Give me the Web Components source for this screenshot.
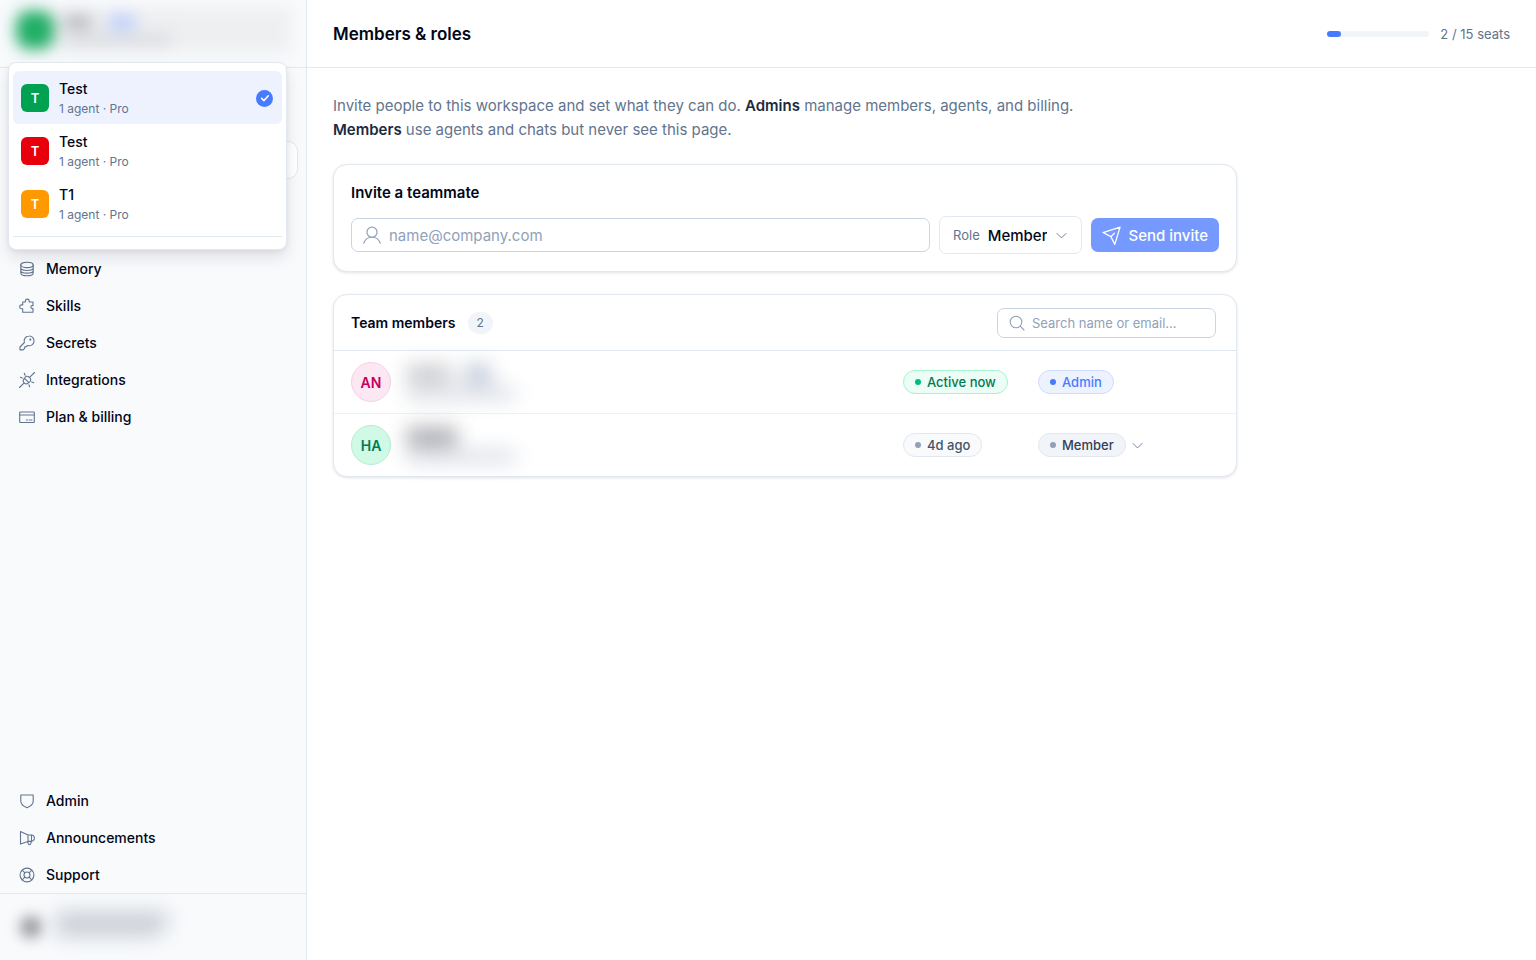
<!DOCTYPE html>
<html lang="en">
<head>
<meta charset="utf-8">
<meta name="viewport" content="width=device-width, initial-scale=1">
<title>Members &amp; roles</title>
<style>
    :root {
        --ink: #020618;
        --muted: #62748e;
        --faint: #90a1b9;
        --line: #e2e8f0;
        --field: #cad5e2;
        --blue: #477bff;
    }
    body {
        margin: 0;
        font-family: Inter, "Liberation Sans", sans-serif;
        font-size: 14px;
        color: var(--ink);
        background: white;
    }
</style>
</head>
<body>
<app-shell>
    <app-sidebar slot="sidebar">
        <workspace-menu slot="menu">
            <workspace-item name="Test" color="#00a251" selected></workspace-item>
            <workspace-item name="Test" color="#e7000b"></workspace-item>
            <workspace-item name="T1" color="#fe9a00"></workspace-item>
        </workspace-menu>
        <nav-item icon="memory">Memory</nav-item>
        <nav-item icon="skills">Skills</nav-item>
        <nav-item icon="key">Secrets</nav-item>
        <nav-item icon="plug">Integrations</nav-item>
        <nav-item icon="card">Plan &amp; billing</nav-item>
        <nav-item slot="bottom" icon="shield">Admin</nav-item>
        <nav-item slot="bottom" icon="megaphone">Announcements</nav-item>
        <nav-item slot="bottom" icon="support">Support</nav-item>
    </app-sidebar>
    <page-header>
        Members &amp; roles
        <seat-meter slot="aside" used="2" total="15"></seat-meter>
    </page-header>
    <members-page>
        <invite-card></invite-card>
        <team-card></team-card>
    </members-page>
</app-shell>

<script>
const ICONS = {
    memory: '<ellipse cx="8" cy="3.900" rx="6.200" ry="2.700"/><path d="M1.800 3.900v8c0 1.600 2.800 2.800 6.200 2.800s6.200-1.200 6.200-2.800v-8M1.800 6.800c0 1.600 2.800 2.700 6.200 2.700s6.200-1.100 6.200-2.700M1.800 9.400c0 1.600 2.800 2.700 6.200 2.700s6.200-1.100 6.200-2.700"/>',
    skills: '<path d="M3.700 4h2.700V3a1.900 1.900 0 0 1 3.800 0v1H14v3.600h-.7a1.500 1.500 0 0 0 0 3h.7v3.600H3.700v-3.500H2.500a1.900 1.900 0 0 1 0-3.800h1.200z"/>',
    key: '<path d="M10 1a4.900 4.900 0 1 1-1.500 9.500L7.300 11.700H5.700v1.600l-1.600 1.600H1V12l4.400-4.500A4.900 4.900 0 0 1 10 1z"/><circle cx="11.300" cy="4.600" r=".5" fill="currentColor"/>',
    plug: '<path d="M.5 15.500l4.400-4.400M11.100 4.900L15.500.5M5.300 6.100l4.600 4.600M6.100 5.300a2.700 2.700 0 0 1 3.900-.3l1 1a2.700 2.700 0 0 1-.3 3.900M5.600 6.300l-.8.800a2.700 2.700 0 0 0 0 3.400l.7.700a2.700 2.700 0 0 0 3.400 0l.8-.8M5.300 1.300l.8 2M1.300 5.300l2 .8M9.900 12.700l.8 2M12.700 9.900l2 .8"/>',
    card: '<rect x=".7" y="3" width="14.600" height="10.500" rx=".6"/><path d="M.7 6h14.600M7.300 11h1.500M10.500 11h2.500"/>',
    shield: '<path d="M1.800 2h12.400v6.300c0 3.200-2.600 5-6.200 6.400-3.600-1.400-6.200-3.200-6.200-6.400z"/>',
    megaphone: '<path d="M1.500 1.500L9 5h3.200a3.200 3.200 0 0 1 0 6.400H9l-7.500 2.700zM9 5v6.400M8.500 11.500l1 2.600c.3.900 1.700.9 2 0l1-2.700V5"/>',
    support: '<circle cx="8" cy="8" r="6.900"/><circle cx="8" cy="8" r="3"/><path d="M3.200 3.200l2.700 2.700M10.100 10.100l2.700 2.700M12.800 3.200l-2.700 2.700M5.900 10.100l-2.700 2.700"/>',
    user: '<circle cx="8" cy="5.500" r="4.500"/><path d="M.7 15.200C1.800 12 4.500 10 8 10s6.200 2 7.300 5.200"/>',
    send: '<path d="M15.200.9L10.800 15.500 7.500 9 .8 5.500zM7.500 9l3-3"/>',
    search: '<circle cx="7" cy="7" r="5.800"/><path d="M11.200 11.200L15 15"/>',
    chevron: '<path d="M2.500 5.500L8 11l5.500-5.500"/>',
    check: '<path d="M3.500 8.500l3 3 6-6.500"/>'
};

class UiIcon extends HTMLElement {
    connectedCallback() {
        this.attachShadow({ mode: 'open' });
        this.shadowRoot.innerHTML = `
            <style>
                :host {
                    display: inline-flex;
                    flex: none;
                    width: 16px;
                    height: 16px;
                }
                svg {
                    width: 100%;
                    height: 100%;
                    fill: none;
                    stroke: currentColor;
                    stroke-width: var(--stroke, 1.1);
                    stroke-linecap: round;
                    stroke-linejoin: round;
                    overflow: visible;
                }
            </style>
            <svg viewBox="0 0 16 16" aria-hidden="true">${ICONS[this.getAttribute('name')]}</svg>
        `;
    }
}
customElements.define('ui-icon', UiIcon);

class AppShell extends HTMLElement {
    connectedCallback() {
        this.attachShadow({ mode: 'open' });
        this.shadowRoot.innerHTML = `
            <style>
                :host {
                    display: grid;
                    grid-template-columns: 307px 1fr;
                    min-height: 100vh;
                }
                main {
                    min-width: 0;
                }
            </style>
            <slot name="sidebar"></slot>
            <main><slot></slot></main>
        `;
    }
}
customElements.define('app-shell', AppShell);

class AppSidebar extends HTMLElement {
    connectedCallback() {
        this.attachShadow({ mode: 'open' });
        this.shadowRoot.innerHTML = `
            <style>
                :host {
                    display: flex;
                    flex-direction: column;
                    box-sizing: border-box;
                    background: #f8fafc;
                    border-right: 1px solid var(--line);
                }
                header {
                    position: relative;
                    z-index: 2;
                    height: 67px;
                    border-bottom: 1px solid var(--line);
                }
                .current, .account {
                    display: flex;
                    align-items: center;
                    overflow: hidden;
                }
                .current {
                    height: 60px;
                    padding: 0 16px;
                }
                .current .wash {
                    flex: 1;
                    display: flex;
                    align-items: center;
                    gap: 10px;
                    height: 44px;
                    background: #eeeff1;
                    filter: blur(7px);
                }
                .tile {
                    width: 38px;
                    height: 38px;
                    border-radius: 14px;
                    background: #1fae65;
                    filter: blur(3px);
                }
                .lines {
                    display: grid;
                    gap: 5px;
                    filter: blur(4px);
                }
                .line {
                    display: flex;
                    gap: 16px;
                }
                .bar {
                    width: 28px;
                    height: 14px;
                    border-radius: 6px;
                    background: #b4b5ba;
                }
                .bar.plan {
                    background: #b7cbfd;
                }
                .bar.wide {
                    width: 108px;
                    height: 12px;
                    background: #d9dbe0;
                }
                .search {
                    height: 36px;
                    margin: 73px 8px 0;
                    border: 1px solid var(--line);
                    border-radius: 10px;
                    background: white;
                }
                nav {
                    display: flex;
                    flex-direction: column;
                    padding: 71px 8px 0;
                }
                .bottom {
                    margin-top: auto;
                    padding: 0 8px;
                }
                .account {
                    height: 66px;
                    gap: 14px;
                    padding: 0 20px;
                    border-top: 1px solid var(--line);
                }
                .account .face {
                    width: 22px;
                    height: 22px;
                    border-radius: 50%;
                    background: #96979c;
                    filter: blur(7px);
                }
                .account .who {
                    width: 112px;
                    height: 24px;
                    margin-bottom: 6px;
                    border-radius: 6px 6px 20px 6px;
                    background: #c9cdd4;
                    filter: blur(10px);
                }
            </style>
            <header>
                <div class="current">
                    <div class="wash">
                        <div class="tile"></div>
                        <div class="lines">
                            <div class="line"><div class="bar"></div><div class="bar plan"></div></div>
                            <div class="bar wide"></div>
                        </div>
                    </div>
                </div>
                <slot name="menu"></slot>
            </header>
            <div class="search"></div>
            <nav><slot></slot></nav>
            <nav class="bottom"><slot name="bottom"></slot></nav>
            <div class="account"><div class="face"></div><div class="who"></div></div>
        `;
    }
}
customElements.define('app-sidebar', AppSidebar);

class NavItem extends HTMLElement {
    connectedCallback() {
        this.attachShadow({ mode: 'open' });
        this.shadowRoot.innerHTML = `
            <style>
                :host {
                    display: block;
                }
                a {
                    display: flex;
                    align-items: center;
                    gap: 11px;
                    height: 37px;
                    padding: 0 11px;
                    border-radius: 8px;
                    color: var(--ink);
                    font-weight: 500;
                    text-decoration: none;
                }
                a:hover {
                    background: #eef2f7;
                }
                ui-icon {
                    color: var(--muted);
                }
            </style>
            <a href="#"><ui-icon name="${this.getAttribute('icon')}"></ui-icon><span><slot></slot></span></a>
        `;
    }
}
customElements.define('nav-item', NavItem);

class WorkspaceMenu extends HTMLElement {
    connectedCallback() {
        this.attachShadow({ mode: 'open' });
        this.shadowRoot.innerHTML = `
            <style>
                :host {
                    position: absolute;
                    top: 62px;
                    left: 8px;
                    right: 19px;
                    box-sizing: border-box;
                    padding: 8px 4px 12px;
                    background: white;
                    border: 1px solid var(--line);
                    border-radius: 8px;
                    box-shadow: 0 8px 16px rgba(15, 23, 43, 0.1), 0 2px 5px rgba(15, 23, 43, 0.06);
                }
                hr {
                    margin: 6px 0 0;
                    border: 0;
                    border-top: 1px solid var(--line);
                }
            </style>
            <slot></slot>
            <hr>
        `;
    }
}
customElements.define('workspace-menu', WorkspaceMenu);

class WorkspaceItem extends HTMLElement {
    connectedCallback() {
        const selected = this.hasAttribute('selected');
        this.attachShadow({ mode: 'open' });
        this.shadowRoot.innerHTML = `
            <style>
                :host {
                    display: block;
                }
                button {
                    display: flex;
                    align-items: center;
                    gap: 10px;
                    width: 100%;
                    padding: 7px 9px 6px 8px;
                    border: 0;
                    border-radius: 6px;
                    background: ${selected ? '#eef2ff' : 'none'};
                    color: var(--ink);
                    font: inherit;
                    text-align: left;
                }
                .tile {
                    display: grid;
                    place-items: center;
                    width: 28px;
                    height: 28px;
                    border-radius: 6px;
                    background: ${this.getAttribute('color')};
                    color: white;
                    font-size: 13px;
                    font-weight: 600;
                }
                .text {
                    flex: 1;
                }
                .name, .info {
                    display: block;
                    line-height: 21px;
                }
                .name {
                    font-weight: 500;
                }
                .info {
                    line-height: 19px;
                    font-size: 12px;
                    color: var(--muted);
                }
                .mark {
                    display: grid;
                    place-items: center;
                    width: 17px;
                    height: 17px;
                    border-radius: 50%;
                    background: var(--blue);
                    color: white;
                }
                .mark ui-icon {
                    --stroke: 2;
                    width: 12px;
                    height: 12px;
                }
            </style>
            <button type="button">
                <span class="tile">T</span>
                <span class="text">
                    <span class="name">${this.getAttribute('name')}</span>
                    <span class="info">1 agent · Pro</span>
                </span>
                ${selected ? '<span class="mark"><ui-icon name="check"></ui-icon></span>' : ''}
            </button>
        `;
    }
}
customElements.define('workspace-item', WorkspaceItem);

class PageHeader extends HTMLElement {
    connectedCallback() {
        this.attachShadow({ mode: 'open' });
        this.shadowRoot.innerHTML = `
            <style>
                :host {
                    display: flex;
                    justify-content: space-between;
                    align-items: center;
                    height: 67px;
                    padding: 0 26px;
                    border-bottom: 1px solid var(--line);
                }
                h1 {
                    margin: 0;
                    font-size: 17px;
                    font-weight: 600;
                }
            </style>
            <h1><slot></slot></h1>
            <slot name="aside"></slot>
        `;
    }
}
customElements.define('page-header', PageHeader);

class SeatMeter extends HTMLElement {
    connectedCallback() {
        const used = this.getAttribute('used');
        const total = this.getAttribute('total');
        this.attachShadow({ mode: 'open' });
        this.shadowRoot.innerHTML = `
            <style>
                :host {
                    display: flex;
                    align-items: center;
                    gap: 11px;
                    color: var(--muted);
                    font-size: 13px;
                }
                progress {
                    appearance: none;
                    width: 102px;
                    height: 6px;
                }
                progress::-webkit-progress-bar {
                    background: #f1f5f9;
                    border-radius: 3px;
                }
                progress::-webkit-progress-value {
                    background: var(--blue);
                    border-radius: 3px;
                }
            </style>
            <progress id="seats" value="${used}" max="${total}"></progress>
            <label for="seats">${used} / ${total} seats</label>
        `;
    }
}
customElements.define('seat-meter', SeatMeter);

class MembersPage extends HTMLElement {
    connectedCallback() {
        this.attachShadow({ mode: 'open' });
        this.shadowRoot.innerHTML = `
            <style>
                :host {
                    display: flex;
                    flex-direction: column;
                    gap: 22px;
                    max-width: 904px;
                    padding: 26px;
                }
                p {
                    max-width: 760px;
                    margin: 0;
                    color: var(--muted);
                    font-size: 15px;
                    line-height: 24px;
                }
                strong {
                    color: #1d293d;
                    font-weight: 600;
                }
            </style>
            <p>Invite people to this workspace and set what they can do. <strong>Admins</strong> manage members, agents, and billing. <strong>Members</strong> use agents and chats but never see this page.</p>
            <slot></slot>
        `;
    }
}
customElements.define('members-page', MembersPage);

const CARD = `
    :host {
        display: block;
        border: 1px solid var(--line);
        border-radius: 14px;
        background: white;
        box-shadow: 0 1px 3px rgba(15, 23, 43, 0.12);
    }
    h2 {
        margin: 0;
        font-size: 15px;
        font-weight: 600;
        line-height: 22px;
    }
    .field {
        display: flex;
        align-items: center;
        box-sizing: border-box;
        border: 1px solid var(--field);
        border-radius: 7px;
        color: var(--faint);
    }
    input {
        flex: 1;
        min-width: 0;
        padding: 0;
        border: 0;
        outline: 0;
        background: none;
        color: var(--ink);
        font: inherit;
    }
    input::placeholder {
        color: var(--faint);
    }
    select {
        appearance: none;
        padding: 0;
        border: 0;
        background: none;
        color: inherit;
        font: inherit;
        field-sizing: content;
    }
`;

class InviteCard extends HTMLElement {
    connectedCallback() {
        this.attachShadow({ mode: 'open' });
        this.shadowRoot.innerHTML = `
            <style>
                ${CARD}
                :host {
                    padding: 17px;
                }
                form {
                    display: flex;
                    align-items: center;
                    gap: 9px;
                    margin-top: 12px;
                }
                .field {
                    flex: 1;
                    gap: 8px;
                    height: 34px;
                    padding: 0 11px;
                    font-size: 15px;
                }
                .field ui-icon {
                    width: 18px;
                    height: 18px;
                }
                .role {
                    display: flex;
                    align-items: center;
                    gap: 8px;
                    box-sizing: border-box;
                    height: 38px;
                    padding: 0 13px;
                    border: 1px solid var(--line);
                    border-radius: 7px;
                    font-size: 15px;
                    font-weight: 500;
                }
                .role label {
                    color: var(--muted);
                    font-size: 13px;
                    font-weight: 400;
                }
                .role ui-icon {
                    width: 13px;
                    height: 13px;
                    color: var(--muted);
                }
                button {
                    display: flex;
                    align-items: center;
                    gap: 7px;
                    height: 34px;
                    padding: 0 11px;
                    border: 0;
                    border-radius: 7px;
                    background: #7699ff;
                    color: white;
                    font: inherit;
                    font-size: 15px;
                    font-weight: 500;
                }
                button ui-icon {
                    width: 19px;
                    height: 19px;
                }
            </style>
            <h2>Invite a teammate</h2>
            <form>
                <div class="field">
                    <ui-icon name="user"></ui-icon>
                    <input type="email" placeholder="name@company.com" aria-label="Email">
                </div>
                <div class="role">
                    <label for="role">Role</label>
                    <select id="role"><option>Member</option><option>Admin</option></select>
                    <ui-icon name="chevron"></ui-icon>
                </div>
                <button type="button"><ui-icon name="send"></ui-icon>Send invite</button>
            </form>
        `;
    }
}
customElements.define('invite-card', InviteCard);

class StatusPill extends HTMLElement {
    connectedCallback() {
        this.attachShadow({ mode: 'open' });
        this.shadowRoot.innerHTML = `
            <style>
                :host {
                    display: inline-flex;
                    align-items: center;
                    gap: 6px;
                    box-sizing: border-box;
                    height: 24px;
                    padding: 0 11px;
                    border: 1px solid var(--line);
                    border-radius: 12px;
                    background: #f8fafc;
                    color: #45556c;
                    font-size: 13px;
                    font-weight: 500;
                    white-space: nowrap;
                }
                :host::before {
                    content: "";
                    width: 6px;
                    height: 6px;
                    border-radius: 50%;
                    background: var(--faint);
                }
                :host([tone="green"]) {
                    border-color: #a4f4cf;
                    background: #ecfdf5;
                    color: #007a55;
                }
                :host([tone="green"])::before {
                    background: #00bc7d;
                }
                :host([tone="blue"]) {
                    border-color: #cfdcff;
                    background: #edf2ff;
                    color: var(--blue);
                }
                :host([tone="blue"])::before {
                    background: var(--blue);
                }
                :host([tone="slate"]) {
                    background: #f1f5f9;
                    color: #314158;
                }
            </style>
            <slot></slot>
        `;
    }
}
customElements.define('status-pill', StatusPill);

class TeamCard extends HTMLElement {
    connectedCallback() {
        this.attachShadow({ mode: 'open' });
        this.shadowRoot.innerHTML = `
            <style>
                ${CARD}
                header {
                    display: flex;
                    align-items: center;
                    gap: 12px;
                    height: 55px;
                    padding: 0 20px 0 17px;
                    border-bottom: 1px solid var(--line);
                }
                h2 {
                    font-size: 14px;
                }
                .count {
                    padding: 0 9px;
                    border-radius: 11px;
                    background: #f1f5f9;
                    color: var(--muted);
                    font-size: 12px;
                    line-height: 22px;
                }
                .field {
                    gap: 7px;
                    width: 219px;
                    height: 30px;
                    margin-left: auto;
                    padding: 0 11px;
                    font-size: 13px;
                }
                table {
                    width: 100%;
                    border-collapse: collapse;
                }
                td {
                    height: 62px;
                    padding: 0;
                }
                tr + tr td {
                    border-top: 1px solid #eef2f7;
                }
                .status {
                    width: 135px;
                }
                .access {
                    width: 198px;
                }
                .person, .pick {
                    display: flex;
                    align-items: center;
                }
                .person {
                    gap: 16px;
                    padding-left: 17px;
                }
                .pick {
                    gap: 5px;
                }
                .pick ui-icon {
                    width: 13px;
                    height: 13px;
                    color: var(--muted);
                }
                .avatar {
                    display: grid;
                    place-items: center;
                    box-sizing: border-box;
                    width: 40px;
                    height: 40px;
                    border: 1px solid #f3d3e2;
                    border-radius: 50%;
                    background: #fce7f3;
                    color: #c6005c;
                    font-size: 14px;
                    font-weight: 600;
                }
                .avatar.green {
                    border-color: #b5ecd3;
                    background: #d0fae5;
                    color: #007a55;
                }
                .redacted {
                    display: grid;
                    gap: 4px;
                    filter: blur(10px);
                }
                .line {
                    display: flex;
                    gap: 14px;
                }
                .bar {
                    width: 44px;
                    height: 18px;
                    background: #c8c9cd;
                }
                .bar.tag {
                    width: 26px;
                    background: #bcc5d6;
                }
                .bar.mail {
                    width: 108px;
                    height: 13px;
                    background: #d9dde4;
                }
                .green + .redacted .line .bar {
                    width: 50px;
                    background: #a5a6ac;
                }
            </style>
            <header>
                <h2>Team members</h2>
                <span class="count">2</span>
                <div class="field">
                    <ui-icon name="search"></ui-icon>
                    <input type="text" placeholder="Search name or email…" aria-label="Search">
                </div>
            </header>
            <table aria-label="Team members">
                <tr>
                    <td>
                        <div class="person">
                            <span class="avatar">AN</span>
                            <div class="redacted">
                                <div class="line"><div class="bar"></div><div class="bar tag"></div></div>
                                <div class="bar mail"></div>
                            </div>
                        </div>
                    </td>
                    <td class="status"><status-pill tone="green">Active now</status-pill></td>
                    <td class="access"><status-pill tone="blue">Admin</status-pill></td>
                </tr>
                <tr>
                    <td>
                        <div class="person">
                            <span class="avatar green">HA</span>
                            <div class="redacted">
                                <div class="line"><div class="bar"></div></div>
                                <div class="bar mail"></div>
                            </div>
                        </div>
                    </td>
                    <td class="status"><status-pill>4d ago</status-pill></td>
                    <td class="access">
                        <div class="pick">
                            <status-pill tone="slate"><select aria-label="Access"><option>Member</option><option>Admin</option></select></status-pill>
                            <ui-icon name="chevron"></ui-icon>
                        </div>
                    </td>
                </tr>
            </table>
        `;
    }
}
customElements.define('team-card', TeamCard);
</script>
</body>
</html>
